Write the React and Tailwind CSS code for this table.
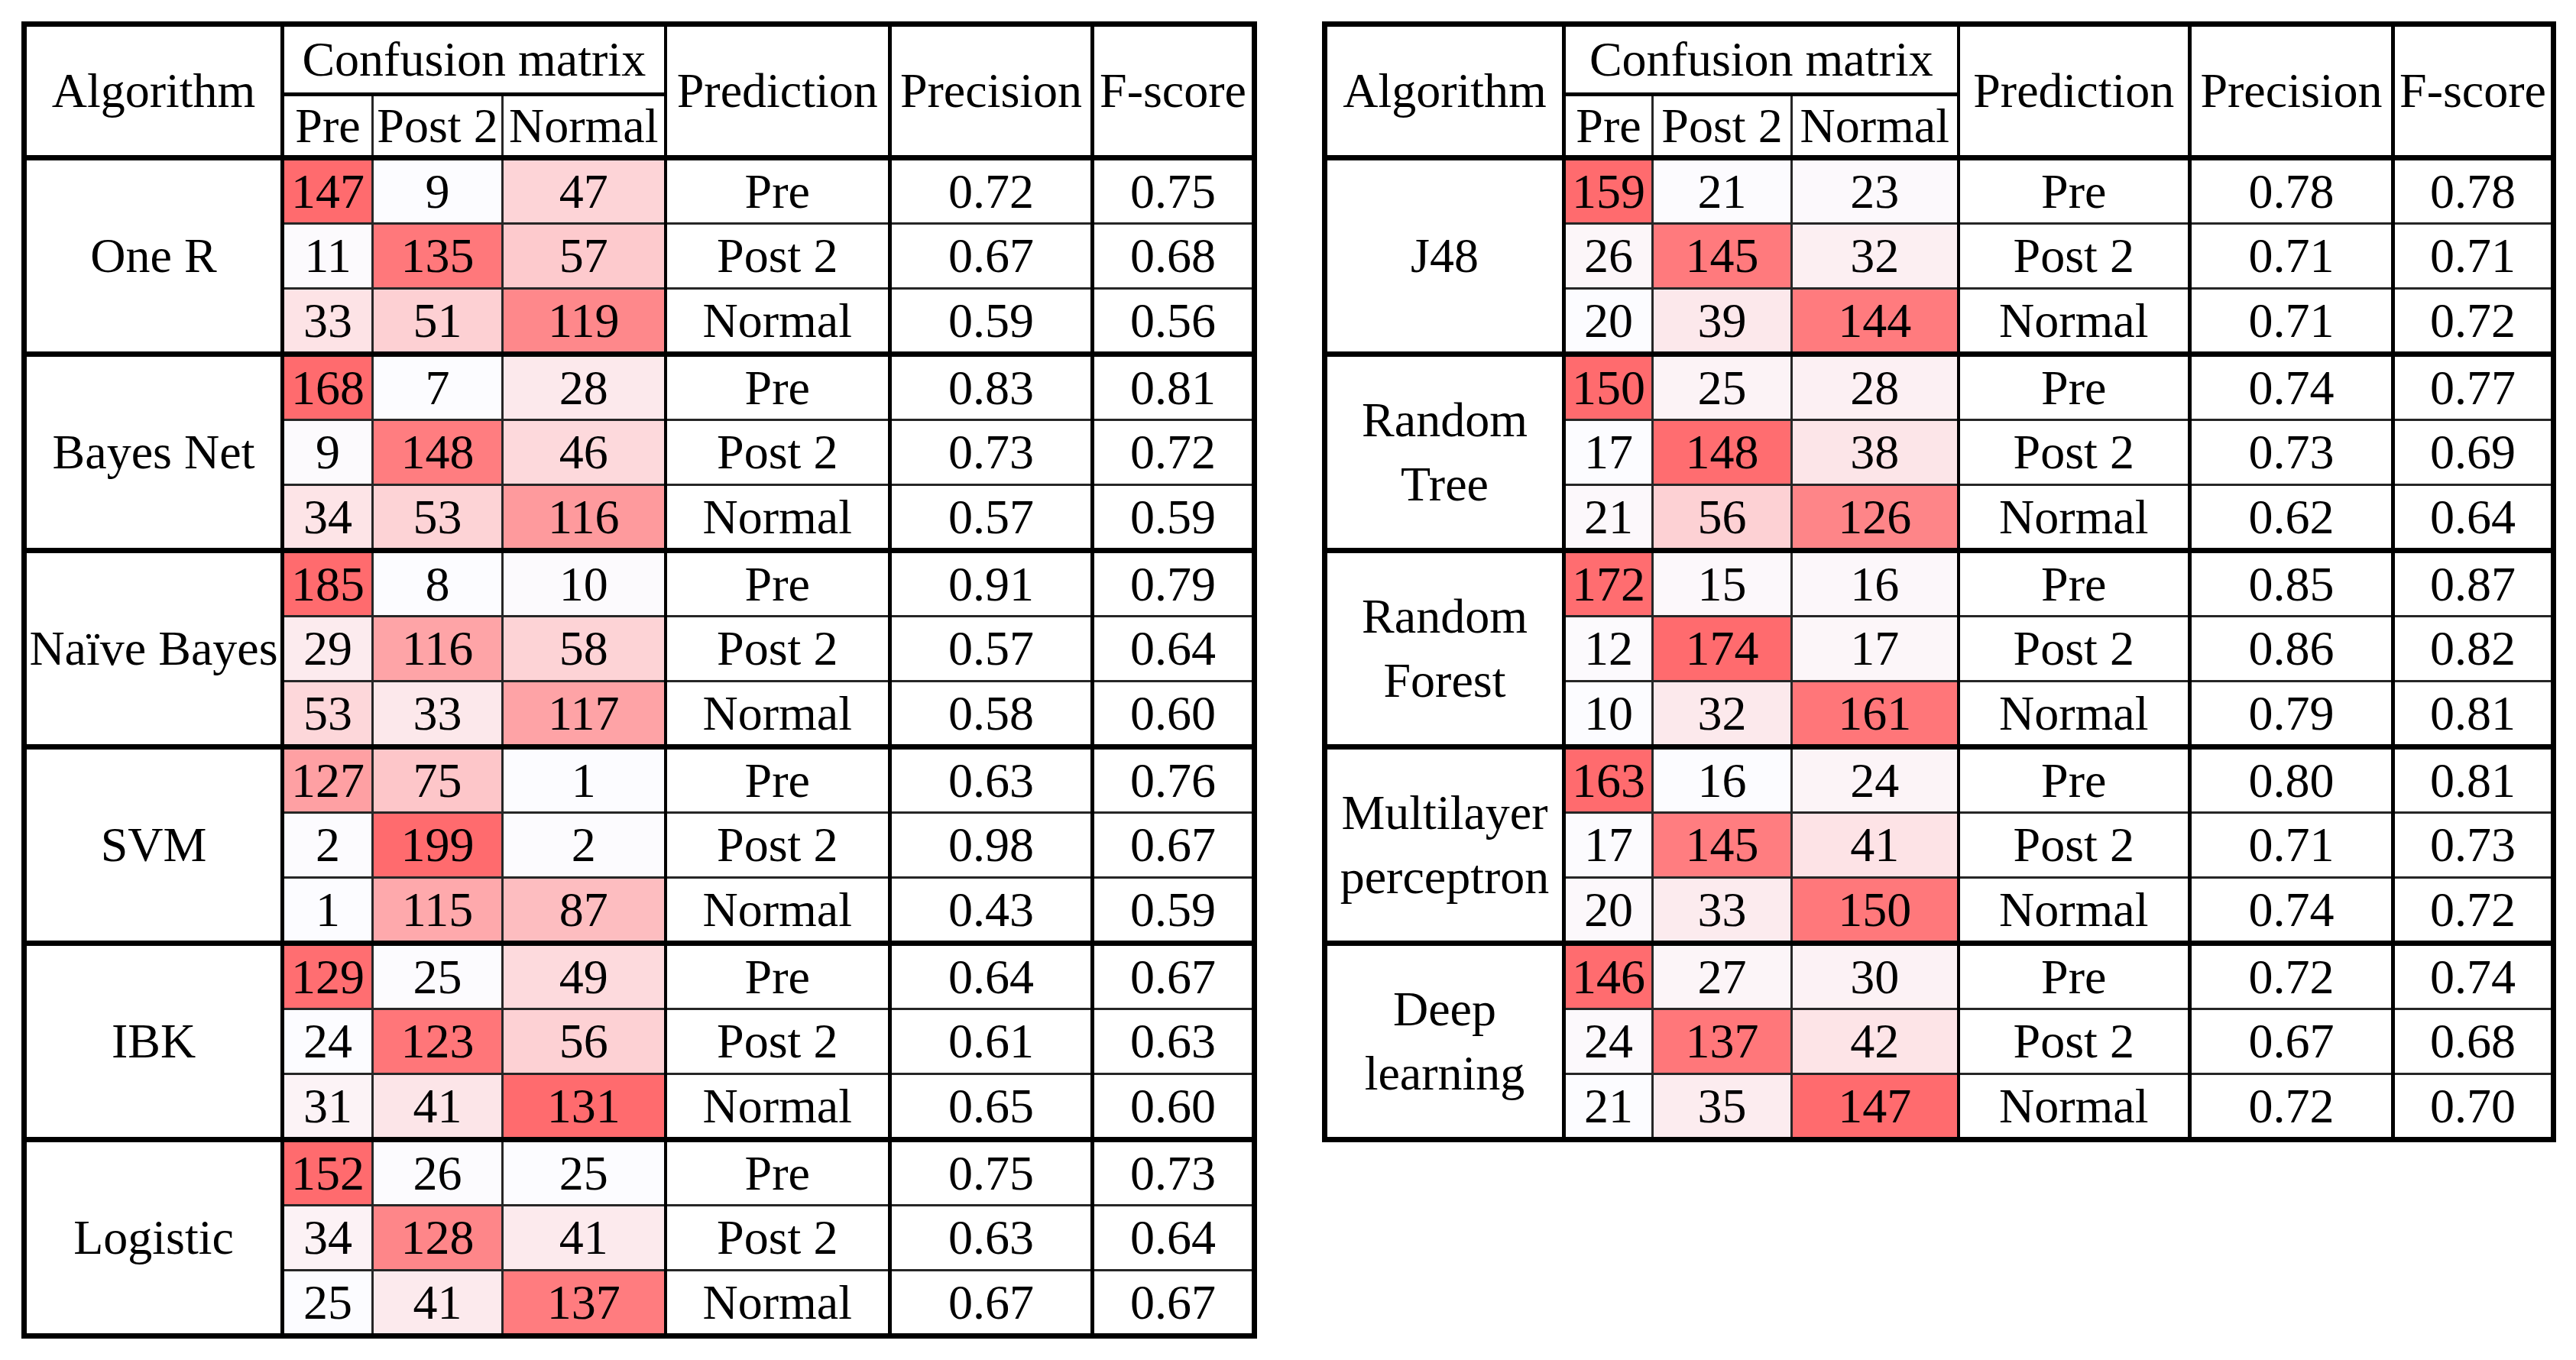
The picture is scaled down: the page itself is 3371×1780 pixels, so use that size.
import React from 'react';

const leftGroups = [
  { name: ['One R'], m: [[147, 9, 47], [11, 135, 57], [33, 51, 119]], s: [['0.72', '0.75'], ['0.67', '0.68'], ['0.59', '0.56']] },
  { name: ['Bayes Net'], m: [[168, 7, 28], [9, 148, 46], [34, 53, 116]], s: [['0.83', '0.81'], ['0.73', '0.72'], ['0.57', '0.59']] },
  { name: ['Naïve Bayes'], m: [[185, 8, 10], [29, 116, 58], [53, 33, 117]], s: [['0.91', '0.79'], ['0.57', '0.64'], ['0.58', '0.60']] },
  { name: ['SVM'], m: [[127, 75, 1], [2, 199, 2], [1, 115, 87]], s: [['0.63', '0.76'], ['0.98', '0.67'], ['0.43', '0.59']] },
  { name: ['IBK'], m: [[129, 25, 49], [24, 123, 56], [31, 41, 131]], s: [['0.64', '0.67'], ['0.61', '0.63'], ['0.65', '0.60']] },
  { name: ['Logistic'], m: [[152, 26, 25], [34, 128, 41], [25, 41, 137]], s: [['0.75', '0.73'], ['0.63', '0.64'], ['0.67', '0.67']] },
];

const rightGroups = [
  { name: ['J48'], m: [[159, 21, 23], [26, 145, 32], [20, 39, 144]], s: [['0.78', '0.78'], ['0.71', '0.71'], ['0.71', '0.72']] },
  { name: ['Random', 'Tree'], m: [[150, 25, 28], [17, 148, 38], [21, 56, 126]], s: [['0.74', '0.77'], ['0.73', '0.69'], ['0.62', '0.64']] },
  { name: ['Random', 'Forest'], m: [[172, 15, 16], [12, 174, 17], [10, 32, 161]], s: [['0.85', '0.87'], ['0.86', '0.82'], ['0.79', '0.81']] },
  { name: ['Multilayer', 'perceptron'], m: [[163, 16, 24], [17, 145, 41], [20, 33, 150]], s: [['0.80', '0.81'], ['0.71', '0.73'], ['0.74', '0.72']] },
  { name: ['Deep', 'learning'], m: [[146, 27, 30], [24, 137, 42], [21, 35, 147]], s: [['0.72', '0.74'], ['0.67', '0.68'], ['0.72', '0.70']] },
];

const labels = ['Pre', 'Post 2', 'Normal'];

// white -> red scale, min/max taken per algorithm block
function heat(v, min, max) {
  const t = max === min ? 0 : (v - min) / (max - min);
  const r = Math.round(252 + (255 - 252) * t);
  const g = Math.round(252 + (107 - 252) * t);
  const b = Math.round(255 + (110 - 255) * t);
  return `rgb(${r},${g},${b})`;
}

const thin = 'border-[3px] border-[#262626]';

function Table({ groups, widths }) {
  return (
    <table className="table-fixed border-collapse border-[7px] border-black bg-white">
      <colgroup>
        {widths.map((w, i) => (
          <col key={i} style={{ width: w }} />
        ))}
      </colgroup>
      <thead>
        <tr>
          <th rowSpan={2} className="border-[7px] border-r-[5px] border-black font-normal">Algorithm</th>
          <th colSpan={3} className="h-[92px] border-t-[7px] border-b-[5px] border-black font-normal">Confusion matrix</th>
          <th rowSpan={2} className="border-[7px] border-l-[4px] border-r-[5px] border-black font-normal">Prediction</th>
          <th rowSpan={2} className="border-[7px] border-x-[5px] border-black font-normal">Precision</th>
          <th rowSpan={2} className="border-[7px] border-l-[5px] border-black font-normal">F-score</th>
        </tr>
        <tr>
          {labels.map((l, i) => (
            <th
              key={l}
              className={`h-[83px] ${thin} border-b-[7px] border-b-black border-t-[5px] border-t-black font-normal ${i === 2 ? 'border-r-[4px] border-r-black' : ''} ${i === 0 ? 'border-l-[5px] border-l-black' : ''}`}
            >
              {l}
            </th>
          ))}
        </tr>
      </thead>
      <tbody>
        {groups.map((g) => {
          const flat = g.m.flat();
          const min = Math.min(...flat);
          const max = Math.max(...flat);
          return g.m.map((row, ri) => (
            <tr key={`${g.name.join(' ')}-${ri}`}>
              {ri === 0 && (
                <td
                  rowSpan={3}
                  className="border-[7px] border-r-[5px] border-black text-center leading-[84px]"
                >
                  {g.name.map((n, k) => (
                    <div key={k}>{n}</div>
                  ))}
                </td>
              )}
              {row.map((v, ci) => (
                <td
                  key={ci}
                  style={{ backgroundColor: heat(v, min, max) }}
                  className={`${ri === 1 ? 'h-[85px]' : 'h-[86px]'} ${thin} text-center ${ri === 0 ? 'border-t-[7px] border-t-black' : ''} ${ri === 2 ? 'border-b-[7px] border-b-black' : ''} ${ci === 0 ? 'border-l-[5px] border-l-black' : ''} ${ci === 2 ? 'border-r-[4px] border-r-black' : ''}`}
                >
                  {v}
                </td>
              ))}
              <td
                className={`${thin} border-l-[4px] border-l-black border-r-[5px] border-r-black text-center ${ri === 0 ? 'border-t-[7px] border-t-black' : ''} ${ri === 2 ? 'border-b-[7px] border-b-black' : ''}`}
              >
                {labels[ri]}
              </td>
              <td
                className={`${thin} border-x-[5px] border-x-black text-center ${ri === 0 ? 'border-t-[7px] border-t-black' : ''} ${ri === 2 ? 'border-b-[7px] border-b-black' : ''}`}
              >
                {g.s[ri][0]}
              </td>
              <td
                className={`${thin} border-l-[5px] border-l-black text-center ${ri === 0 ? 'border-t-[7px] border-t-black' : ''} ${ri === 2 ? 'border-b-[7px] border-b-black' : ''}`}
              >
                {g.s[ri][1]}
              </td>
            </tr>
          ));
        })}
      </tbody>
    </table>
  );
}

export default function App() {
  return (
    <div className="min-h-screen bg-white font-['Liberation_Serif',serif] text-[64px] leading-none text-black">
      <div className="flex items-start gap-[85px] pl-[28px] pt-[28px]">
        <Table groups={leftGroups} widths={[338, 118, 170, 213, 294, 265, 212]} />
        <Table groups={rightGroups} widths={[313, 116, 182, 218, 303, 266, 210]} />
      </div>
    </div>
  );
}
